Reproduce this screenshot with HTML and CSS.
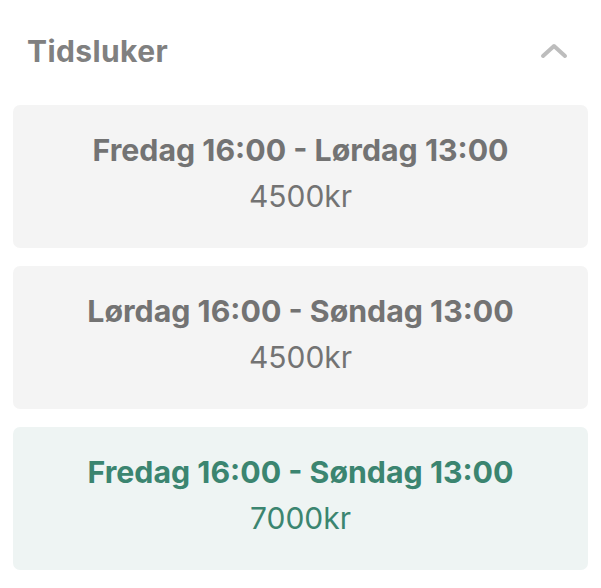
FILE: index.html
```html
<!DOCTYPE html>
<html lang="no">
<head>
<meta charset="utf-8">
<link rel="stylesheet" href="styles.css">
</head>
<body>
<section class="panel">
  <header class="panel-head">
    <h2 class="panel-title">Tidsluker</h2>
    <svg class="chevron" width="28" height="16" viewBox="0 0 28 16" aria-hidden="true">
      <path d="M3 13 L14 3 L25 13" fill="none" stroke="#bdbdbd" stroke-width="4" stroke-linecap="round" stroke-linejoin="round"/>
    </svg>
  </header>
  <div class="slots">
    <div class="slot">
      <div class="slot-time">Fredag 16:00 - Lørdag 13:00</div>
      <div class="slot-price">4500kr</div>
    </div>
    <div class="slot">
      <div class="slot-time">Lørdag 16:00 - Søndag 13:00</div>
      <div class="slot-price">4500kr</div>
    </div>
    <div class="slot slot-selected">
      <div class="slot-time">Fredag 16:00 - Søndag 13:00</div>
      <div class="slot-price">7000kr</div>
    </div>
  </div>
</section>
</body>
</html>
```
FILE: styles.css
```css
html, body {
  margin: 0;
  padding: 0;
  background: #ffffff;
}
body {
  font-family: Inter, "Noto Sans", sans-serif;
}
.panel {
  padding: 0 13px 0 13px;
}
.panel-head {
  display: flex;
  align-items: center;
  justify-content: space-between;
  height: 105px;
  padding: 0 20px 0 14px;
  box-sizing: border-box;
}
.panel-title {
  margin: 0;
  margin-top: -4px;
  font-size: 30px;
  line-height: 36px;
  font-weight: 700;
  color: #808080;
  letter-spacing: 0.4px;
}
.chevron {
  display: block;
  margin-top: -4px;
}
.slots {
  display: flex;
  flex-direction: column;
  gap: 18px;
}
.slot {
  background: #f4f4f4;
  border-radius: 7px;
  height: 143px;
  box-sizing: border-box;
  padding-bottom: 7px;
  display: flex;
  flex-direction: column;
  align-items: center;
  justify-content: center;
  color: #737373;
  gap: 10px;
}
.slot-time {
  font-size: 30.3px;
  font-weight: 700;
  line-height: 36px;
}
.slot-price {
  font-size: 30px;
  font-weight: 400;
  line-height: 36px;
}
.slot-selected {
  background: #eef4f3;
  color: #3b8570;
}
```
